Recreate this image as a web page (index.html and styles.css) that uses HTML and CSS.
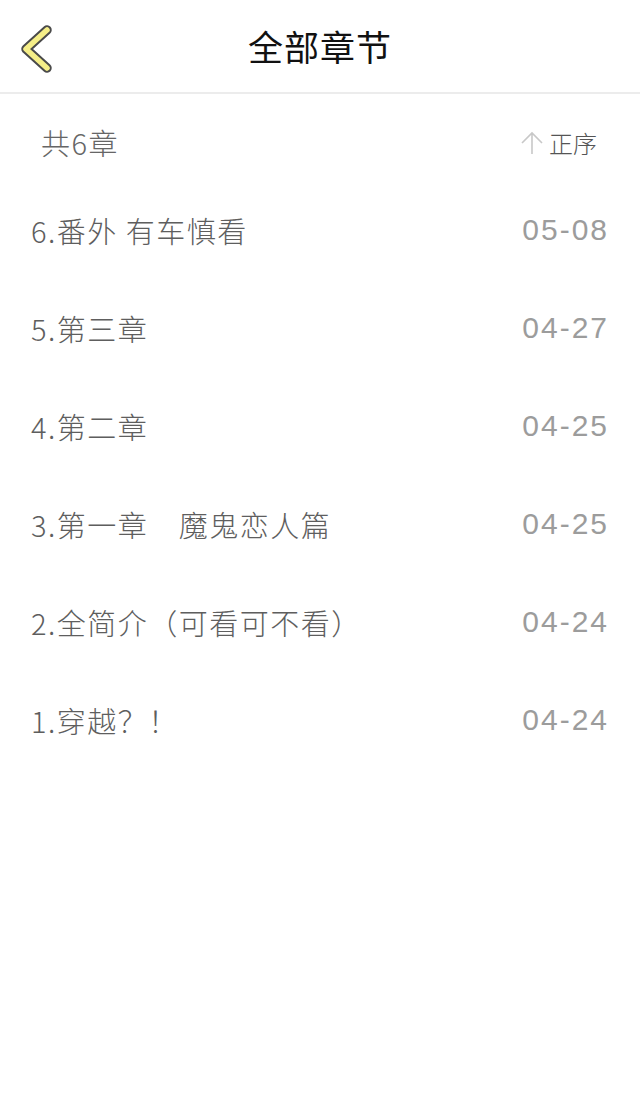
FILE: index.html
```html
<!DOCTYPE html>
<html lang="zh-CN">
<head>
<meta charset="utf-8">
<title>全部章节</title>
<link rel="stylesheet" href="styles.css">
</head>
<body>
<div class="page">
  <header class="topbar">
    <a class="back" href="#">
      <svg width="60" height="92" viewBox="0 0 60 92">
        <polyline points="47,30 26,49 47,68" fill="none" stroke="#4a4a4a" stroke-width="9.5" stroke-linecap="round" stroke-linejoin="round"/>
        <polyline points="47,30 26,49 47,68" fill="none" stroke="#f5ee88" stroke-width="5.5" stroke-linecap="round" stroke-linejoin="round"/>
      </svg>
    </a>
    <h1 class="title">全部章节</h1>
    <span class="spacer"></span>
  </header>
  <div class="summary">
    <span class="count">共6章</span>
    <span class="sort">
      <svg class="arrow" width="24" height="24" viewBox="0 0 24 24">
        <path d="M12 2 V23 M2 12 L12 2 L22 12" fill="none" stroke="#c8c8c8" stroke-width="1.6"/>
      </svg>
      <span class="sort-label">正序</span>
    </span>
  </div>
  <ul class="chapters">
    <li class="chapter"><span class="name">6.番外 有车慎看</span><span class="date">05-08</span></li>
    <li class="chapter"><span class="name">5.第三章</span><span class="date">04-27</span></li>
    <li class="chapter"><span class="name">4.第二章</span><span class="date">04-25</span></li>
    <li class="chapter"><span class="name">3.第一章&#12288;魔鬼恋人篇</span><span class="date">04-25</span></li>
    <li class="chapter"><span class="name">2.全简介（可看可不看）</span><span class="date">04-24</span></li>
    <li class="chapter"><span class="name">1.穿越？！</span><span class="date">04-24</span></li>
  </ul>
</div>
</body>
</html>
```
FILE: styles.css
```css
html, body {
  margin: 0;
  padding: 0;
  background: #ffffff;
}
body {
  font-family: "Noto Sans CJK SC", "Noto Sans", sans-serif;
}
.page {
  width: 640px;
  min-height: 1102px;
  background: #fff;
}
.topbar {
  height: 92px;
  border-bottom: 2px solid #ececec;
  display: grid;
  grid-template-columns: 1fr auto 1fr;
  align-items: center;
}
.back {
  display: block;
  width: 60px;
  height: 92px;
}
.back svg {
  display: block;
}
.title {
  margin: 0;
  font-size: 35px;
  font-weight: 400;
  color: #111;
  line-height: 92px;
  letter-spacing: 1px;
}
.summary {
  height: 88px;
  box-sizing: border-box;
  padding: 8px 43px 0 41px;
  display: flex;
  align-items: center;
  justify-content: space-between;
}
.count {
  font-size: 29px;
  font-weight: 300;
  color: #666;
  letter-spacing: 1.5px;
}
.sort {
  display: flex;
  align-items: center;
  gap: 5px;
}
.arrow {
  display: block;
  margin-top: 2px;
}
.sort-label {
  font-size: 24px;
  font-weight: 300;
  color: #555;
}
.chapters {
  list-style: none;
  margin: 0;
  padding: 0;
}
.chapter {
  height: 98px;
  box-sizing: border-box;
  display: flex;
  align-items: center;
  justify-content: space-between;
  padding: 0 31px 2px 31px;
}
.name {
  font-size: 29px;
  font-weight: 300;
  color: #5e5e5e;
  letter-spacing: 1.5px;
}
.date {
  font-size: 30px;
  color: #9c9c9c;
  font-family: "Liberation Sans", "Noto Sans CJK SC", sans-serif;
  letter-spacing: 2px;
}
```
